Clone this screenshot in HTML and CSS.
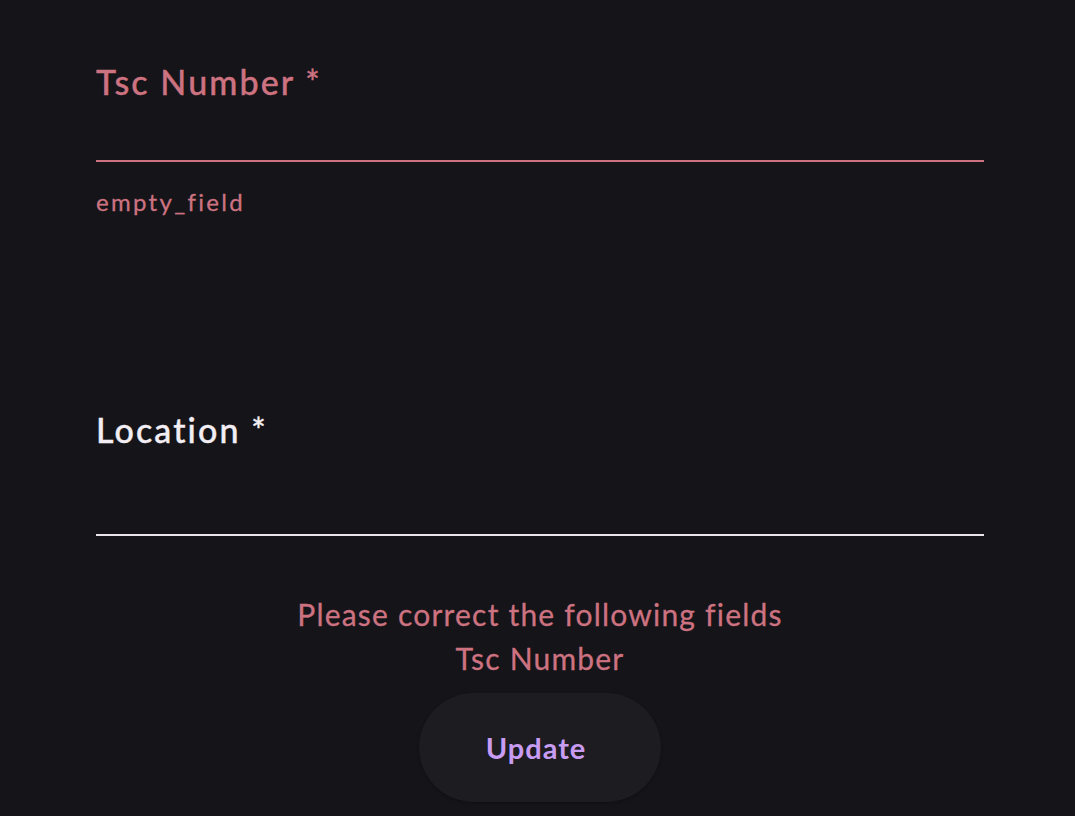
FILE: index.html
```html
<!DOCTYPE html>
<html>
<head>
<meta charset="utf-8">
<link rel="stylesheet" href="styles.css">
</head>
<body>
<main class="form">
  <div class="field field-error">
    <div class="label">Tsc Number *</div>
    <div class="input input-first"></div>
    <div class="helper">empty_field</div>
  </div>
  <div class="field field-normal">
    <div class="label">Location *</div>
    <div class="input input-second"></div>
  </div>
  <div class="summary">
    <div class="summary-line">Please correct the following fields</div>
    <div class="summary-line">Tsc Number</div>
  </div>
  <div class="actions">
    <button class="btn">Update</button>
  </div>
</main>
</body>
</html>
```
FILE: styles.css
```css
html, body {
  margin: 0;
  padding: 0;
  background: #151419;
}
body {
  font-family: Lato, "Open Sans", sans-serif;
  width: 1075px;
  height: 816px;
  overflow: hidden;
}
.form {
  padding: 62px 91px 0 96px;
  display: flex;
  flex-direction: column;
}
.field {
  display: flex;
  flex-direction: column;
}
.label {
  font-size: 34px;
  line-height: 40px;
  font-weight: 500;
  letter-spacing: 2.1px;
  -webkit-text-stroke: 0.4px currentColor;
}
.field-error .label { color: #cc7280; }
.field-normal .label { color: #f2eef4; }
.input {
  border-bottom: 2px solid;
}
.input-first {
  height: 58px;
  border-color: #cc7280;
}
.input-second {
  height: 84px;
  border-color: #e8e4ea;
}
.helper {
  margin-top: 24px;
  font-size: 24px;
  line-height: 32px;
  color: #cc7280;
  letter-spacing: 2.3px;
  -webkit-text-stroke: 0.3px currentColor;
}
.field-normal {
  margin-top: 192px;
}
.summary {
  margin-top: 56px;
  text-align: center;
  color: #cc7280;
  font-size: 30px;
  line-height: 44px;
  letter-spacing: 1.2px;
  -webkit-text-stroke: 0.3px currentColor;
}
.actions {
  display: flex;
  justify-content: center;
  margin-top: 13px;
}
.btn {
  width: 242px;
  height: 109px;
  padding: 0 8px 0 0;
  border: none;
  border-radius: 55px;
  background: #1d1c21;
  color: #c79cf2;
  font-family: Lato, "Open Sans", sans-serif;
  font-size: 29px;
  font-weight: 700;
  letter-spacing: 1px;
  box-shadow: 0 1px 3px rgba(0,0,0,0.3);
}
```
